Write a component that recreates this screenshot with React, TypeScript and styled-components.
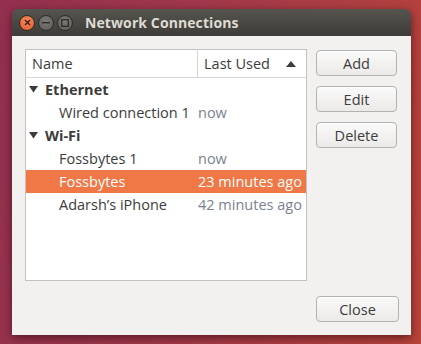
import React from 'react';
import styled, { createGlobalStyle } from 'styled-components';

const GlobalStyle = createGlobalStyle`
  html, body {
    margin: 0;
    padding: 0;
  }
  body {
    font-family: "Open Sans", "DejaVu Sans", sans-serif;
  }
`;

const Desktop = styled.div`
  width: 421px;
  height: 344px;
  overflow: hidden;
  padding: 9px 0 0 12px;
  box-sizing: border-box;
  background: linear-gradient(100deg, #93304f 0%, #a2384a 45%, #b8443a 100%);
`;

const Window = styled.div`
  width: 399px;
  height: 326px;
  display: flex;
  flex-direction: column;
  border-radius: 6px 6px 0 0;
  overflow: hidden;
  box-shadow: 0 3px 10px rgba(30, 0, 10, 0.55);
`;

const TitleBar = styled.div`
  height: 27px;
  display: flex;
  align-items: center;
  padding-left: 7px;
  gap: 3px;
  background: linear-gradient(#56544e, #3d3c38);
`;

const WinButton = styled.div<{ $kind: 'close' | 'min' | 'max' }>`
  width: 16px;
  height: 16px;
  box-sizing: border-box;
  border-radius: 50%;
  display: flex;
  align-items: center;
  justify-content: center;
  background: ${(p) =>
    p.$kind === 'close'
      ? 'radial-gradient(circle at 50% 35%, #f58a5c, #e05a2a)'
      : 'radial-gradient(circle at 50% 35%, #7b7a74, #5c5b56)'};
  border: 1px solid #2e2d2a;
`;

const Title = styled.div`
  margin-left: 9px;
  color: #dfdbd2;
  font-weight: 700;
  font-size: 14px;
  letter-spacing: 0.1px;
`;

const Body = styled.div`
  flex: 1;
  background: #f2f1f0;
  padding: 13px 12px 13px 13px;
  display: flex;
  flex-direction: column;
`;

const Top = styled.div`
  display: flex;
  gap: 9px;
`;

const Tree = styled.div`
  width: 282px;
  height: 232px;
  box-sizing: border-box;
  background: #ffffff;
  border: 1px solid #c4c2bf;
  font-size: 14.5px;
  color: #3c3c3c;
`;

const Header = styled.div`
  display: flex;
  height: 27px;
  border-bottom: 1px solid #d8d6d3;
`;

const HeadCell = styled.div<{ $w: number; $divider?: boolean }>`
  width: ${(p) => p.$w}px;
  display: flex;
  align-items: center;
  justify-content: space-between;
  padding-left: 6px;
  padding-right: 10px;
  box-sizing: border-box;
  border-right: ${(p) => (p.$divider ? '1px solid #d8d6d3' : 'none')};
`;

const Row = styled.div<{ $selected?: boolean }>`
  display: flex;
  height: 23px;
  align-items: center;
  background: ${(p) => (p.$selected ? '#f07746' : 'transparent')};
  color: ${(p) => (p.$selected ? '#ffffff' : '#3c3c3c')};
`;

const NameCell = styled.div<{ $indent: number; $bold?: boolean }>`
  width: 172px;
  padding-left: ${(p) => p.$indent}px;
  box-sizing: border-box;
  display: flex;
  align-items: center;
  gap: 7px;
  font-weight: ${(p) => (p.$bold ? 700 : 400)};
  white-space: nowrap;
`;

const TimeCell = styled.div<{ $selected?: boolean }>`
  color: ${(p) => (p.$selected ? '#ffffff' : '#7a8290')};
  white-space: nowrap;
`;

const Side = styled.div`
  display: flex;
  flex-direction: column;
  gap: 10px;
  padding-top: 1px;
`;

const Button = styled.button<{ $w?: number }>`
  width: ${(p) => p.$w ?? 81}px;
  height: 26px;
  border: 1px solid #b4b2ae;
  border-radius: 4px;
  background: linear-gradient(#fafafa, #eceae8);
  font-family: inherit;
  font-size: 14.5px;
  color: #3c3c3c;
  padding: 0;
  box-shadow: 0 1px 0 rgba(255, 255, 255, 0.6) inset;
`;

const Footer = styled.div`
  margin-top: auto;
  display: flex;
  justify-content: flex-end;
`;

const Expander = () => (
  <svg width="9" height="7" viewBox="0 0 9 7">
    <polygon points="0,0 9,0 4.5,6.5" fill="#3c3c3c" />
  </svg>
);

const SortUp = () => (
  <svg width="10" height="6" viewBox="0 0 10 6">
    <polygon points="0,6 10,6 5,0" fill="#3c3c3c" />
  </svg>
);

const CloseGlyph = () => (
  <svg width="7" height="7" viewBox="0 0 7 7">
    <path d="M1 1 L6 6 M6 1 L1 6" stroke="#3a1a10" strokeWidth="1.3" />
  </svg>
);

const MinGlyph = () => (
  <svg width="8" height="2" viewBox="0 0 8 2">
    <rect width="8" height="1.4" fill="#2e2d2a" />
  </svg>
);

const MaxGlyph = () => (
  <svg width="8" height="8" viewBox="0 0 8 8">
    <rect x="0.7" y="0.7" width="6.6" height="6.6" fill="none" stroke="#2e2d2a" strokeWidth="1.3" />
  </svg>
);

type Item = { name: string; time: string; selected?: boolean };
const groups: { label: string; items: Item[] }[] = [
  { label: 'Ethernet', items: [{ name: 'Wired connection 1', time: 'now' }] },
  {
    label: 'Wi-Fi',
    items: [
      { name: 'Fossbytes 1', time: 'now' },
      { name: 'Fossbytes', time: '23 minutes ago', selected: true },
      { name: 'Adarsh’s iPhone', time: '42 minutes ago' },
    ],
  },
];

const App = () => {
  return (
    <>
      <GlobalStyle />
      <Desktop>
        <Window>
          <TitleBar>
            <WinButton $kind="close"><CloseGlyph /></WinButton>
            <WinButton $kind="min"><MinGlyph /></WinButton>
            <WinButton $kind="max"><MaxGlyph /></WinButton>
            <Title>Network Connections</Title>
          </TitleBar>
          <Body>
            <Top>
              <Tree>
                <Header>
                  <HeadCell $w={172} $divider>Name</HeadCell>
                  <HeadCell $w={108}>
                    Last Used
                    <SortUp />
                  </HeadCell>
                </Header>
                {groups.map((g) => (
                  <React.Fragment key={g.label}>
                    <Row>
                      <NameCell $indent={3} $bold>
                        <Expander />
                        {g.label}
                      </NameCell>
                    </Row>
                    {g.items.map((it) => (
                      <Row key={it.name} $selected={it.selected}>
                        <NameCell $indent={33}>{it.name}</NameCell>
                        <TimeCell $selected={it.selected}>{it.time}</TimeCell>
                      </Row>
                    ))}
                  </React.Fragment>
                ))}
              </Tree>
              <Side>
                <Button>Add</Button>
                <Button>Edit</Button>
                <Button>Delete</Button>
              </Side>
            </Top>
            <Footer>
              <Button $w={83}>Close</Button>
            </Footer>
          </Body>
        </Window>
      </Desktop>
    </>
  );
};

export default App;
